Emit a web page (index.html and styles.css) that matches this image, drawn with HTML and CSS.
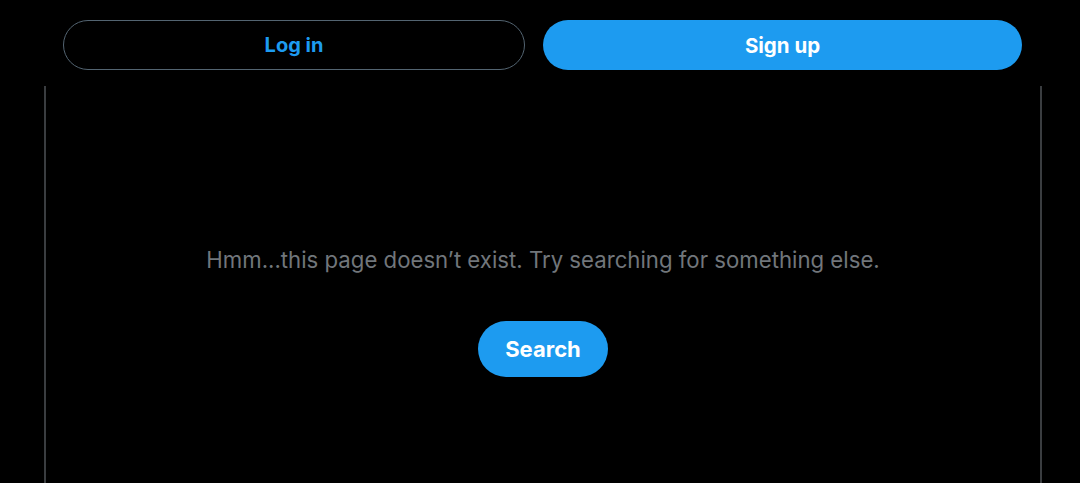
FILE: index.html
```html
<!DOCTYPE html>
<html lang="en">
<head>
  <meta charset="UTF-8">
  <meta name="viewport" content="width=device-width, initial-scale=1.0">
  <title>Page not found</title>
  <link rel="stylesheet" href="styles.css">
</head>
<body>

  <div class="top-bar">
    <button class="login-btn">Log in</button>
    <button class="signup-btn">Sign up</button>
  </div>

  <div class="column">
    <div class="empty-state">
      <p class="empty-text">Hmm...this page doesn’t exist. Try searching for something else.</p>
      <button class="search-btn">Search</button>
    </div>
  </div>

</body>
</html>
```

FILE: styles.css
```css
body {
  margin: 0; background: #000; color: #e7e9ea;
  font-family: Inter, "Noto Sans", sans-serif;
  height: 483px; overflow: hidden;
}
.top-bar {
  display: flex; gap: 18px; padding: 20px 0 16px 63px;
}
button {
  font-family: inherit; font-weight: 700; cursor: pointer;
  border-radius: 9999px;
}
.login-btn {
  width: 462px; height: 50px; background: transparent;
  border: 1px solid #536471; color: #1d9bf0; font-size: 20px;
}
.signup-btn {
  width: 479px; height: 50px; background: #1d9bf0;
  border: none; color: #fff; font-size: 20.5px;
}
.column {
  margin-left: 44px; width: 994px; height: 400px;
  border-left: 2px solid #3a3d40; border-right: 2px solid #3a3d40;
}
.empty-state {
  display: flex; flex-direction: column; align-items: center;
  padding-top: 159px;
}
.empty-text {
  margin: 0; font-size: 22.2px; color: #71767b; line-height: 30px;
}
.search-btn {
  margin-top: 46px; height: 56px; padding: 0 27px;
  background: #1d9bf0; border: none; color: #fff; font-size: 22px;
}
```
